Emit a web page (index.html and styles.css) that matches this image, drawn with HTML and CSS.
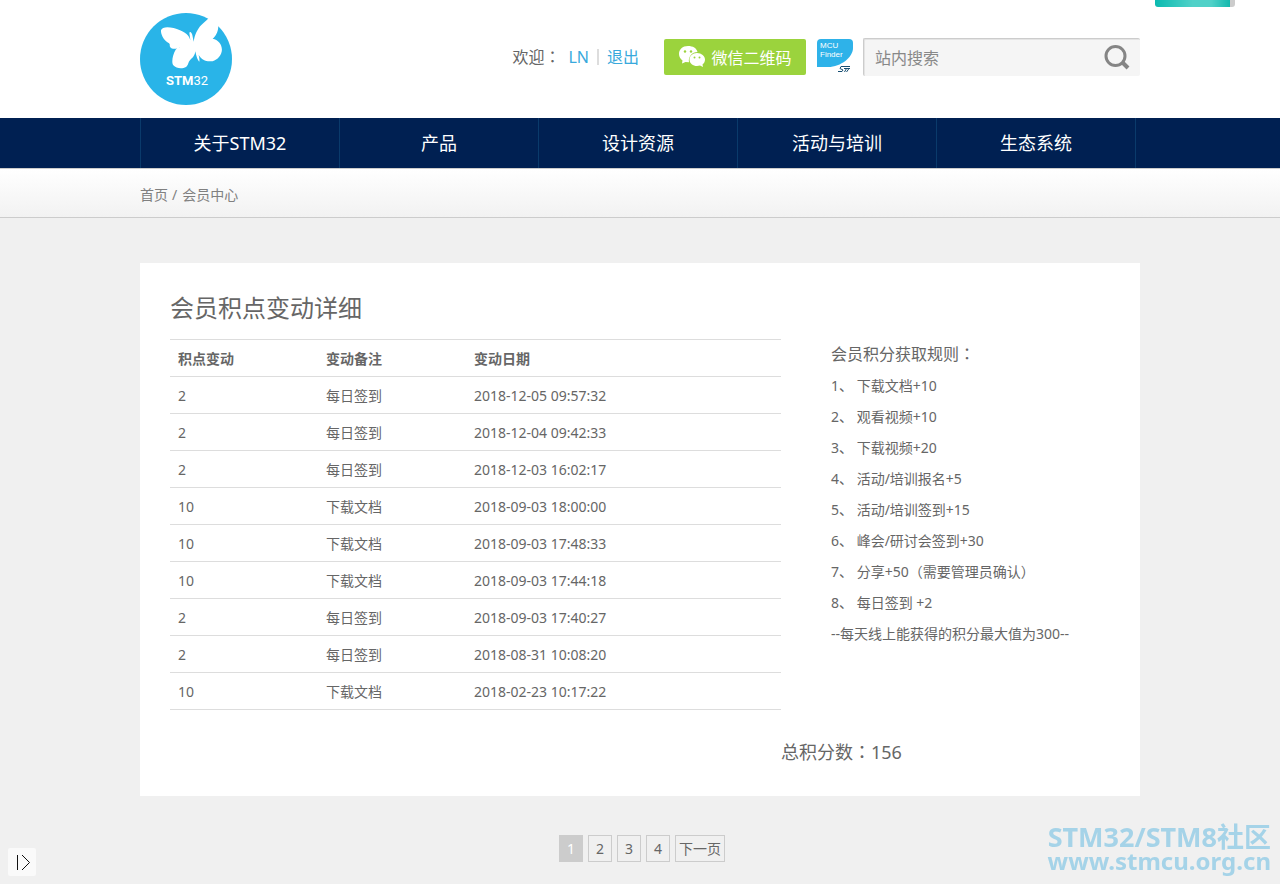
FILE: index.html
```html
<!DOCTYPE html>
<html lang="zh-CN">
<head>
    <meta charset="UTF-8">
    <meta name="viewport" content="width=device-width, initial-scale=1.0">
    <title>会员积点变动详细</title>
    <link rel="stylesheet" href="styles.css">
</head>
<body>
    <header class="header">
        <div class="container header-inner">
            <a class="logo" href="#" aria-label="STM32">
                <svg width="92" height="92" viewBox="30 24 276 276">
                    <circle cx="168" cy="162" r="138" fill="#29b4e8"/>
                    <path fill="#fff" d="M93 76C97 62 128 66 150 76C174 86 178 96 181 106L178 83C181 78 185 83 187 90L191 110C193 92 202 72 214 60C225 49 236 43 240 34L254 14L282 56L265 64C264 82 257 94 248 101C266 104 279 122 275 140C271 156 258 168 242 169C226 170 214 162 208 153C204 147 202 142 200 136C205 145 210 160 208 170C203 166 199 153 196 139C194 156 184 160 180 166C174 172 176 180 168 186C157 192 139 191 130 181C123 171 129 147 137 134C143 127 150 129 151 126C143 132 126 134 121 127C117 120 122 118 116 114C106 109 92 92 93 76Z"/>
                    <text class="logo-text" x="108" y="240"><tspan class="logo-bold">STM</tspan>32</text>
                </svg>
            </a>
            <div class="tools">
                <div class="welcome"><span>欢迎<span class="punct" lang="zh-TW">：</span></span><a href="#">LN</a><span class="divider"></span><a href="#">退出</a></div>
                <button type="button" class="wechat">
                    <svg width="28" height="24" viewBox="0 0 28 24">
                        <path fill="#fff" d="M10 1C4.500 1 1 4.500 1 9C1 12 2.500 14 4.500 15.500L4 18.500L7.500 17L11 17.300C10 12 14 7 19.500 7C18.500 3 15 1 10 1Z"/>
                        <path fill="#fff" d="M19 8C14.500 8 11.500 11 11.500 14.500C11.500 18.500 15 21 19 21L22 20.500L25 22L24.500 19.500C26 18.500 27 16.500 27 14.500C27 11 23.500 8 19 8Z"/>
                        <g fill="#9bd33d"><circle cx="7" cy="6.500" r="1.200"/><circle cx="13" cy="6.500" r="1.200"/><circle cx="16.500" cy="12.500" r="1"/><circle cx="21.500" cy="12.500" r="1"/></g>
                    </svg>
                    <span>微信二维码</span>
                </button>
                <a class="finder" href="#" aria-label="MCU Finder">
                    <svg width="36" height="36" viewBox="0 0 36 36">
                        <path fill="#2eb2e9" d="M0 28V4Q0 0 4 0H32Q36 0 36 4V9C36 18 24 28 11 28Z"/>
                        <text class="finder-text" x="3" y="9">MCU</text>
                        <text class="finder-text" x="3" y="18">Finder</text>
                        <path fill="none" stroke="#174e72" d="M33 27.500H24L23 29.500L26 31L25 32.500H21M27 29.500H33M29.500 29.500L27.500 33M32 29.500L29.500 33"/>
                    </svg>
                </a>
                <form class="search">
                    <input type="text" placeholder="站内搜索" aria-label="站内搜索">
                    <button type="button" aria-label="搜索">
                        <svg width="26" height="26" viewBox="0 0 26 26" fill="none" stroke="#858585">
                            <circle cx="11.500" cy="11" r="9.500" stroke-width="3"/>
                            <path d="M18 17L24 23" stroke-width="4"/>
                        </svg>
                    </button>
                </form>
            </div>
        </div>
    </header>

    <nav class="nav">
        <div class="container nav-list">
            <a href="#">关于STM32</a>
            <a href="#">产品</a>
            <a href="#">设计资源</a>
            <a href="#">活动与培训</a>
            <a href="#">生态系统</a>
        </div>
    </nav>

    <div class="crumbs">
        <div class="container"><a href="#">首页</a><span class="slash">/</span><a href="#">会员中心</a></div>
    </div>

    <main class="container">
        <section class="card">
            <h1>会员积点变动详细</h1>
            <div class="columns">
                <table class="points">
                    <thead>
                        <tr><th>积点变动</th><th>变动备注</th><th>变动日期</th></tr>
                    </thead>
                    <tbody>
                        <tr><td>2</td><td>每日签到</td><td>2018-12-05 09:57:32</td></tr>
                        <tr><td>2</td><td>每日签到</td><td>2018-12-04 09:42:33</td></tr>
                        <tr><td>2</td><td>每日签到</td><td>2018-12-03 16:02:17</td></tr>
                        <tr><td>10</td><td>下载文档</td><td>2018-09-03 18:00:00</td></tr>
                        <tr><td>10</td><td>下载文档</td><td>2018-09-03 17:48:33</td></tr>
                        <tr><td>10</td><td>下载文档</td><td>2018-09-03 17:44:18</td></tr>
                        <tr><td>2</td><td>每日签到</td><td>2018-09-03 17:40:27</td></tr>
                        <tr><td>2</td><td>每日签到</td><td>2018-08-31 10:08:20</td></tr>
                        <tr><td>10</td><td>下载文档</td><td>2018-02-23 10:17:22</td></tr>
                    </tbody>
                </table>
                <div class="rules">
                    <h2>会员积分获取规则<span class="punct" lang="zh-TW">：</span></h2>
                    <p>1、 下载文档+10</p>
                    <p>2、 观看视频+10</p>
                    <p>3、 下载视频+20</p>
                    <p>4、 活动/培训报名+5</p>
                    <p>5、 活动/培训签到+15</p>
                    <p>6、 峰会/研讨会签到+30</p>
                    <p>7、 分享+50<span class="punct" lang="zh-TW">（</span>需要管理员确认<span class="punct" lang="zh-TW">）</span></p>
                    <p>8、 每日签到 +2</p>
                    <p>--每天线上能获得的积分最大值为300--</p>
                </div>
                <div class="total">总积分数<span class="punct" lang="zh-TW">：</span>156</div>
            </div>
        </section>

        <nav class="pages" aria-label="分页">
            <span class="current">1</span>
            <a href="#">2</a>
            <a href="#">3</a>
            <a href="#">4</a>
            <a href="#">下一页</a>
        </nav>
    </main>

    <div class="top-tab"></div>

    <button type="button" class="expand" aria-label="展开">
        <svg width="28" height="28" viewBox="0 0 28 28" fill="none" stroke="#111">
            <path d="M9.500 7V22M14 7L21.500 14.500L14 22"/>
        </svg>
    </button>

    <div class="watermark">
        <div class="mark-name">STM32/STM8社区</div>
        <div class="mark-url">www.stmcu.org.cn</div>
    </div>
</body>
</html>
```
FILE: styles.css
```css
* {
    box-sizing: border-box;
}

body {
    margin: 0;
    background: #f0f0f0;
    color: #666;
    font-family: "Noto Sans", "Noto Sans CJK SC", sans-serif;
    font-size: 14px;
    line-height: 20px;
}

a {
    color: inherit;
    text-decoration: none;
}

button, input {
    font-family: inherit;
    border: 0;
    padding: 0;
}

svg {
    display: block;
}

.container {
    max-width: 1000px;
    margin: 0 auto;
}

/* Punctuation centred in its box */
.punct {
    font-family: "Noto Sans CJK TC", sans-serif;
    line-height: 1;
}

/* Header */
.header {
    background: #fff;
}

.header-inner {
    display: flex;
    justify-content: space-between;
    align-items: flex-start;
    padding: 13px 0;
}

.logo-text {
    fill: #fff;
    font-family: Roboto, sans-serif;
    font-size: 39px;
}

.logo-bold {
    font-weight: bold;
}

.tools {
    display: flex;
    align-items: center;
    margin-top: 25px;
}

.welcome {
    display: flex;
    align-items: center;
    gap: 8px;
    margin-right: 25px;
    font-size: 16px;
}

.welcome a {
    color: #39a9dc;
}

.divider {
    width: 2px;
    height: 16px;
    background: #ddd;
}

.wechat {
    display: flex;
    align-items: center;
    justify-content: center;
    gap: 5px;
    width: 142px;
    height: 36px;
    margin-right: 11px;
    background: #9bd33d;
    border-radius: 2px;
    color: #fff;
    font-size: 16px;
}

.finder {
    margin-right: 10px;
}

.finder-text {
    fill: #fff;
    font-family: "Liberation Sans", Arial, sans-serif;
    font-size: 8px;
}

.search {
    display: flex;
    align-items: center;
    width: 277px;
    height: 38px;
    padding: 0 10px 0 11px;
    background: #f5f5f5;
    border-top: 1px solid #ccc;
    border-left: 1px solid #ccc;
    border-radius: 2px;
    box-shadow: inset 1px 1px 0 #e4e4e4;
}

.search input {
    flex: 1;
    min-width: 0;
    background: transparent;
    font-size: 16px;
}

.search input::placeholder {
    color: #888;
}

.search button {
    background: transparent;
}

/* Main navigation */
.nav {
    background: #002052;
}

.nav-list {
    display: flex;
    padding-right: 4px;
}

.nav-list a {
    flex: 1;
    border-left: 1px solid #0a3a6b;
    color: #fff;
    font-size: 18px;
    line-height: 50px;
    text-align: center;
}

.nav-list a:last-child {
    border-right: 1px solid #0a3a6b;
}

.crumbs {
    padding: 16px 0 12px;
    background: linear-gradient(#fff, #f2f2f2);
    border-top: 1px solid #ccc;
    border-bottom: 1px solid #ccc;
    color: #808080;
}

.slash {
    margin: 0 5px 0 4px;
}

/* Points card */
.card {
    margin-top: 45px;
    padding: 30px;
    background: #fff;
}

h1 {
    margin: 0 0 16px;
    font-size: 24px;
    font-weight: normal;
    line-height: 30px;
}

.columns {
    display: grid;
    grid-template-columns: 65% 1fr;
}

.points {
    width: 100%;
    table-layout: fixed;
    border-collapse: collapse;
    border-bottom: 1px solid #ddd;
}

.points th, .points td {
    padding: 9px 8px 7px;
    border-top: 1px solid #ddd;
    text-align: left;
}

.points th:nth-child(1), .points th:nth-child(2) {
    width: 148px;
}

.rules {
    padding-left: 50px;
}

.rules h2 {
    margin: 0;
    font-size: 16px;
    font-weight: normal;
    line-height: 31px;
}

.rules p {
    margin: 0;
    line-height: 31px;
}

.total {
    grid-column: 2;
    margin-top: 29px;
    font-size: 18px;
    line-height: 27px;
}

/* Pagination */
.pages {
    display: flex;
    justify-content: center;
    gap: 5px;
    padding: 39px 0 22px 4px;
}

.pages a, .pages span {
    padding: 3px 7px;
    border: 1px solid #ccc;
    line-height: 19px;
}

.pages a:last-child {
    padding: 3px;
}

.pages .current {
    background: #ccc;
    color: #fff;
}

/* Floating items */
.top-tab {
    position: fixed;
    top: 0;
    right: 45px;
    width: 80px;
    height: 7px;
    background: linear-gradient(90deg, #0abab0, #50d1c8 50%, #50d1c8 75%, #14b8ad);
    border-right: 5px solid #ccc;
    border-radius: 0 0 3px 3px;
}

.expand {
    position: fixed;
    left: 8px;
    bottom: 8px;
    background: #fafafa;
    border-radius: 2px;
}

.watermark {
    position: fixed;
    right: 9px;
    bottom: 12px;
    color: #a5d3e8;
    font-weight: bold;
    text-align: right;
}

.mark-name {
    font-size: 27px;
    line-height: 26px;
}

.mark-url {
    font-size: 24px;
    line-height: 22px;
}
```
